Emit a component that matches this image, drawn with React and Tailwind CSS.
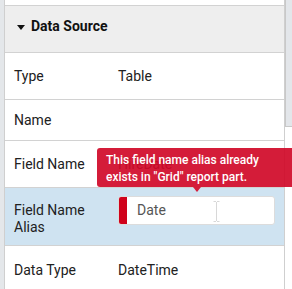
import { useState } from 'react';

const rows = [
    { label: 'Type', value: 'Table', h: 'h-[47px]' },
    { label: 'Name', value: '', h: 'h-[41px]' },
    { label: 'Field Name', value: 'HireDate', h: 'h-[47px]', muted: true },
];

const App = () => {
    const [alias, setAlias] = useState('Date');

    return (
        <div className="relative w-[292px] h-[289px] overflow-hidden bg-white flex text-[14px] text-[#212121] font-['Roboto',sans-serif]">
            <div className="w-[5px] shrink-0 bg-[#e4e7ea] border-r border-[#cfcfcf]" />

            <div className="flex-1 flex flex-col border-r border-[#cfcfcf]">
                <div className="h-[6px] shrink-0 border-b border-[#d2d2d2]" />
                <div className="h-[47px] shrink-0 bg-[#eeeeee] border-b border-[#d2d2d2] flex items-center pl-[12px] pb-[5px] gap-[6px]">
                    <svg width="8" height="5" viewBox="0 0 8 5" className="mt-[1px]">
                        <path d="M0 0h8L4 5z" fill="#111" />
                    </svg>
                    <span className="text-[14px] font-bold text-[#111]">Data Source</span>
                </div>

                {rows.map((r) => (
                    <div key={r.label} className={`${r.h} shrink-0 border-b border-[#d2d2d2] flex items-center px-[9px]`}>
                        <span className="w-[104px] shrink-0">{r.label}</span>
                        <span className={r.muted ? 'text-[#555]' : ''}>{r.value}</span>
                    </div>
                ))}

                <div className="h-[58px] shrink-0 bg-[#cfe3f1] border-b border-[#d2d2d2] flex items-start px-[9px] pt-[8px]">
                    <span className="w-[104px] shrink-0 leading-[17px] pt-[6px]">Field Name<br />Alias</span>
                    <div className="relative flex h-[29px] w-[157px] bg-white rounded-[3px] border border-[#dcdcdc] overflow-hidden">
                        <div className="w-[8px] shrink-0 bg-[#d0021b]" />
                        <input
                            value={alias}
                            onChange={(e) => setAlias(e.target.value)}
                            className="flex-1 min-w-0 pl-[10px] text-[14px] text-[#555] outline-none bg-transparent"
                        />
                    </div>
                </div>

                <div className="flex-1 flex items-start px-[9px] pt-[14px]">
                    <span className="w-[104px] shrink-0">Data Type</span>
                    <span>DateTime</span>
                </div>
            </div>

            <div className="w-[7px] shrink-0">
                <div className="h-[127px] bg-[#e3e6ea] border-l border-[#c8c8c8] border-b" />
            </div>

            {/* validation tooltip */}
            <div className="absolute left-[97px] top-[148px] w-[210px] h-[39px] rounded-[3px] bg-[#cf0324]/90 text-white text-[12px] font-medium leading-[17px] pl-[9px] pt-[4px]">
                This field name alias already<br />exists in "Grid" report part.
                <div className="absolute left-[96px] top-[39px] w-0 h-0 border-l-[4px] border-r-[4px] border-t-[5px] border-l-transparent border-r-transparent border-t-[#d41c3a]" />
            </div>

            {/* mouse text cursor */}
            <svg className="absolute left-[213px] top-[201px]" width="7" height="21" viewBox="0 0 7 21">
                <path d="M0.5 0.5h2.5M4 0.5h2.5M3.5 1v19M0.5 20.5h2.5M4 20.5h2.5" stroke="#d8d8d8" strokeWidth="1" fill="none" />
            </svg>
        </div>
    );
};

export default App;
